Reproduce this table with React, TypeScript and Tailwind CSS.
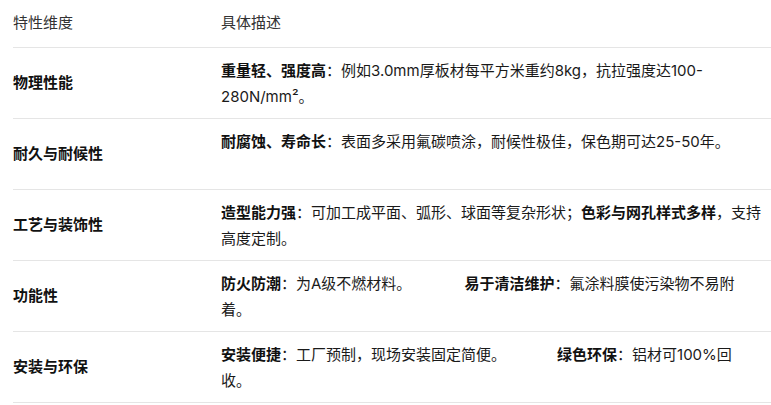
const rows = [
  {
    label: '物理性能',
    desc: (
      <>
        <b className="font-bold text-[#111]">重量轻、强度高</b>：例如3.0mm厚板材每平方米重约8kg，抗拉强度达100-280N/mm²。
      </>
    ),
  },
  {
    label: '耐久与耐候性',
    desc: (
      <>
        <b className="font-bold text-[#111]">耐腐蚀、寿命长</b>：表面多采用氟碳喷涂，耐候性极佳，保色期可达25-50年。
      </>
    ),
  },
  {
    label: '工艺与装饰性',
    desc: (
      <>
        <b className="font-bold text-[#111]">造型能力强</b>：可加工成平面、弧形、球面等复杂形状；
        <b className="font-bold text-[#111]">色彩与网孔样式多样</b>，支持高度定制。
      </>
    ),
  },
  {
    label: '功能性',
    desc: (
      <>
        <b className="font-bold text-[#111]">防火防潮</b>：为A级不燃材料。
        <span className="inline-block w-[53px]" />
        <b className="font-bold text-[#111]">易于清洁维护</b>：氟涂料膜使污染物不易附
        <br />
        着。
      </>
    ),
  },
  {
    label: '安装与环保',
    desc: (
      <>
        <b className="font-bold text-[#111]">安装便捷</b>：工厂预制，现场安装固定简便。
        <span className="inline-block w-[51px]" />
        <b className="font-bold text-[#111]">绿色环保</b>：铝材可100%回
        <br />
        收。
      </>
    ),
  },
];

export default function App() {
  return (
    <div
      className="w-[771px] h-[405px] overflow-hidden bg-white pl-[13px] text-[15px] leading-[26px] text-[#1a1a1a]"
      style={{ fontFamily: 'Inter, "Noto Sans CJK SC", sans-serif' }}
    >
      <table className="w-[770px] border-collapse table-fixed">
        <colgroup>
          <col className="w-[208px]" />
          <col />
        </colgroup>
        <thead>
          <tr className="border-b border-[#e5e5e5]">
            <th className="h-[47px] p-0 text-left font-normal text-[#333]">特性维度</th>
            <th className="h-[47px] p-0 text-left font-normal text-[#333]">具体描述</th>
          </tr>
        </thead>
        <tbody>
          {rows.map((r) => (
            <tr key={r.label} className="border-b border-[#e5e5e5]">
              <td className="p-0 align-middle font-bold text-[#111]">{r.label}</td>
              <td className="pt-[10px] pb-[8px] pr-[18px] align-top">
                <div className="min-h-[52px]">{r.desc}</div>
              </td>
            </tr>
          ))}
        </tbody>
      </table>
    </div>
  );
}
